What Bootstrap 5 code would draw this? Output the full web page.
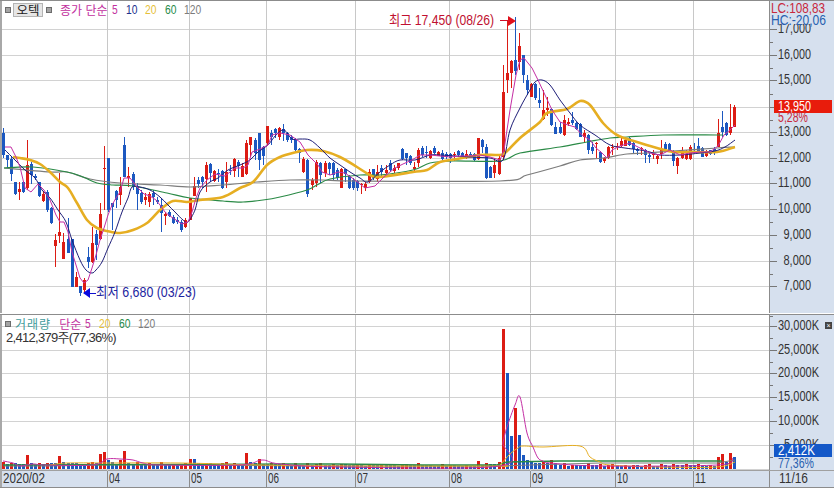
<!DOCTYPE html>
<html lang="ko">
<head>
<meta charset="utf-8">
<title>오텍 차트</title>
<link href="https://cdn.jsdelivr.net/npm/bootstrap@5.3.0/dist/css/bootstrap.min.css" rel="stylesheet">
<style>
html,body{margin:0;background:#fff;overflow:hidden}
body{font-family:"Liberation Sans","Noto Sans CJK KR",sans-serif}
.shell{width:834px;height:489px;border-top:1px solid #8c8c8c;background:#fff}
.pane-price{height:312px}
.pane-vol{height:156px;border-top:1px solid #8c8c8c}
.pane-sep{height:1px;background:#fff}
.dates{height:18px}
.plot{width:769px;flex:none;border-left:2px solid #a8a8a8}
.axis{width:65px;flex:none;background:#d6e0ee;border-left:1px solid #8c8c8c}
svg{display:block}
svg text{font-family:"Liberation Sans","Noto Sans CJK KR",sans-serif;font-size:14px}
.legend-bar{top:2px;left:5px;height:14px;white-space:nowrap}
.legend-bar2{top:2px;left:5px;white-space:nowrap}
.lg-row{height:14px;line-height:14px}
.sq{width:6px;height:6px;background:#a4a4a4;border:1px solid #6c6c6c;flex:none}
.ot-btn{width:30px;height:14px;margin:0 3px 0 2px;padding:0;font-size:12.5px;line-height:12px;background:#e6e6e6;border:1px solid #b4b4b4;border-radius:0;color:#222;font-family:"Noto Sans CJK KR",sans-serif}
.hg{font-family:"Noto Sans CJK KR",sans-serif;font-size:12px;line-height:14px}
.hg-wide{letter-spacing:1px}
.num{display:inline-block;font-family:"Liberation Sans",sans-serif;font-size:13.5px;line-height:14px;transform:scaleX(.76);transform-origin:left center}
.d1{width:6px}.d2{width:11.5px}.d3{width:17px}
.c-ma5{color:#c2309e}.c-ma10{color:#20308c}.c-ma20{color:#e6c038}.c-ma60{color:#1f8a48}.c-ma120{color:#7c7c7c}.c-vol{color:#3f9c9c}
.stat{height:14px;font-size:13px;line-height:14px;color:#333;letter-spacing:-.7px;margin-left:1px;font-family:"Liberation Sans","Noto Sans CJK KR",sans-serif}
.x-btn{top:7px;right:2px;width:7px;height:7px;background:#444;color:#fff;font-size:7px;line-height:7px;text-align:center}
</style>
</head>
<body>
<main class="shell d-flex flex-column">
  <section class="pane-price d-flex position-relative">
    <div class="plot"><svg id="priceSvg" width="767" height="312" viewBox="2 1 767 312"></svg></div>
    <div class="axis"><svg id="priceAxis" width="64" height="312" viewBox="770 1 64 312"></svg></div>
    <div class="legend-bar position-absolute d-flex align-items-center">
      <span class="sq"></span>
      <button type="button" class="ot-btn btn">오텍</button>
      <span class="sq"></span>
      <span class="hg c-ma5 ms-2">종가 단순</span>
      <span class="num d1 c-ma5 ms-1">5</span>
      <span class="num d2 c-ma10 ms-2">10</span>
      <span class="num d2 c-ma20 ms-2">20</span>
      <span class="num d2 c-ma60 ms-2">60</span>
      <span class="num d3 c-ma120 ms-2">120</span>
    </div>
  </section>
  <div class="pane-sep"></div>
  <section class="pane-vol d-flex position-relative">
    <div class="plot"><svg id="volSvg" width="767" height="156" viewBox="2 315 767 156"></svg></div>
    <div class="axis"><svg id="volAxis" width="64" height="156" viewBox="770 315 64 156"></svg></div>
    <div class="legend-bar2 position-absolute">
      <div class="lg-row d-flex align-items-center">
        <span class="sq"></span>
        <span class="hg hg-wide c-vol ms-1">거래량</span>
        <span class="hg c-ma5 ms-2">단순</span>
        <span class="num d1 c-ma5 ms-1">5</span>
        <span class="num d2 c-ma20 ms-2">20</span>
        <span class="num d2 c-ma60 ms-2">60</span>
        <span class="num d3 c-ma120 ms-2">120</span>
      </div>
      <div class="stat">2,412,379주(77,36%)</div>
    </div>
    <span class="x-btn position-absolute">×</span>
  </section>
  <footer class="dates"><svg id="dateSvg" width="834" height="18" viewBox="0 470 834 18"></svg></footer>
</main>
<script src="https://cdn.jsdelivr.net/npm/bootstrap@5.3.0/dist/js/bootstrap.bundle.min.js"></script>
<script>
const RED='#dc1c14',BLUE='#1c58c0',GRID='#d2d2d2',VGRID='#c8c8c8';
const raw=`4b 133 155 128 158|8b 155 160 155 168|12b 159 174 157 181|16b 182 194 182 195|20r 189 192 182 200|24b 182 192 181 193|28r 165 188 140 190|32b 164 175 162 184|36b 176 178 174 180|40b 182 196 182 197|44r 194 201 191 202|48b 192 210 190 212|52b 208 223 207 224|56r 240 246 234 267|60r 232 236 173 243|64r 242 259 233 259|69b 239 253 218 253|73b 239 287 239 287|77r 277 287 272 287|81b 286 293 286 296|85r 280 290 278 293|89b 257 262 247 268|93r 243 262 227 263|97b 234 245 230 260|101r 214 239 203 240|105r 168 169 146 210|109b 158 210 158 212|113b 203 207 203 230|117b 191 200 190 208|121r 187 195 177 205|125b 145 177 137 177|129r 176 178 167 187|134b 174 187 172 190|138b 187 194 183 210|142b 193 202 190 204|146r 197 200 193 205|150r 194 202 192 207|154b 193 197 190 205|158b 200 202 197 204|162b 205 213 198 232|166r 214 216 212 225|170b 212 216 210 217|174b 217 223 215 224|178b 220 222 217 224|182b 222 230 220 232|186r 220 227 218 228|191r 198 220 198 220|195r 186 196 177 196|199b 180 184 177 188|203b 177 182 176 188|207r 165 179 162 192|211b 164 173 163 182|215r 171 181 170 182|219b 173 174 169 182|223b 171 188 170 189|227r 172 182 162 188|231b 170 171 165 175|235r 159 171 158 177|239b 162 166 160 177|243r 166 177 163 177|247r 143 174 140 175|251r 137 145 137 157|256b 140 153 138 160|260b 133 160 133 170|264b 147 156 146 165|268r 126 143 126 145|272b 133 137 130 145|276b 129 133 128 138|280r 128 137 127 140|284b 129 133 124 141|288b 133 140 132 142|292b 137 140 135 143|296b 139 150 138 153|300b 149 153 148 163|304r 159 172 157 173|308b 160 194 159 197|313r 180 185 178 190|317r 162 183 160 187|321b 163 175 162 183|326r 163 173 161 177|330b 163 169 162 175|334b 163 175 162 180|338b 170 178 168 180|342r 169 188 168 188|346b 169 174 169 182|350b 176 188 175 189|354b 180 188 178 190|358b 181 188 180 191|362r 184 185 183 194|366r 184 188 182 191|370r 172 182 169 183|374b 169 178 169 180|378r 172 179 165 182|382b 168 172 165 178|387r 170 173 165 175|391b 163 170 160 172|395r 168 171 165 173|399r 163 168 163 170|403b 149 159 148 160|407b 153 158 153 165|411b 156 163 155 165|415r 167 169 162 172|419r 150 163 148 167|423b 148 155 146 157|427b 152 153 146 158|431r 151 158 150 159|435b 148 153 146 154|439r 152 156 151 156|443b 153 159 150 160|447b 154 157 152 159|451b 154 158 153 163|455r 154 155 152 161|459b 151 155 150 157|463b 153 156 152 158|467r 154 157 150 159|471b 154 156 152 157|475b 154 160 153 161|479r 138 159 138 160|483b 140 147 139 153|487b 147 178 144 179|491b 167 178 166 178|495r 165 173 158 178|500r 158 174 155 175|504r 92 157 65 160|508r 73 80 20 93|512r 61 73 60 88|516b 60 71 17 75|520r 46 62 33 70|524b 55 75 55 83|528b 80 90 75 95|532r 84 97 83 97|536b 84 98 83 100|540b 100 103 88 108|544r 110 119 90 120|548r 108 110 97 116|552b 109 125 108 126|556b 127 134 122 134|561b 127 133 122 134|565r 120 135 115 136|569r 122 124 118 126|573b 120 123 112 125|577b 123 129 122 130|581b 124 137 123 137|585r 133 137 130 142|589b 135 150 134 154|593b 147 151 142 154|597r 143 144 142 158|601b 152 162 151 163|605r 158 161 157 163|609r 147 158 146 159|613r 147 148 144 155|618r 146 147 143 150|622r 141 146 138 147|626r 140 146 137 146|630b 138 145 137 146|634b 143 149 142 153|638b 149 151 148 155|642r 148 149 147 155|646b 150 155 149 163|650b 155 157 153 163|654r 154 155 150 159|658r 156 159 155 164|662r 149 154 140 159|666b 144 149 142 152|670b 144 152 143 152|674b 151 161 150 166|678r 158 166 157 174|683r 151 158 147 159|687r 154 159 150 160|691r 147 159 145 160|695b 151 152 143 153|699b 146 152 138 153|703b 148 157 147 157|707r 152 156 150 157|711b 150 154 150 155|715b 149 153 147 155|719r 133 147 119 147|723b 127 132 111 137|727b 123 135 122 136|731r 127 133 104 135|735r 107 127 105 127`;
const candles=raw.split('|').map(s=>{const p=s.split(' ');return{x:parseInt(p[0]),c:p[0].slice(-1),t:+p[1],b:+p[2],h:+p[3],l:+p[4]}});

const ma5=`5,147 11,147 16,157 20,167 25,188 31,192 38,184 44,190 50,200 56,215 60,222 64,222 68,232 72,252 76,265 80,278 84,283 88,280 92,268 96,255 100,240 104,228 108,215 112,205 116,198 120,192 124,178 130,178 134,183 138,188 144,194 150,196 156,200 160,205 165,212 170,216 176,220 182,224 188,222 192,212 196,198 200,188 207,180 215,174 225,176 235,168 243,168 248,165 252,152 260,149 268,145 272,135 280,133 290,135 300,142 308,155 318,165 322,172 330,175 338,172 345,173 355,180 365,188 375,186 385,176 395,168 403,164 412,160 420,155 430,155 440,156 450,157 460,156 470,156 480,155 490,157 500,160 504,150 510,110 516,75 520,60 524,58 532,68 538,80 545,95 552,110 560,122 568,125 575,127 582,135 590,140 596,148 602,153 607,158 612,150 620,146 630,143 640,148 650,153 660,155 670,150 680,155 690,153 700,152 710,152 718,146 724,135 730,130 735,125`;
const ma10=`5,150 15,160 25,170 35,178 42,190 50,198 58,210 66,222 72,240 80,260 86,270 92,273 96,270 102,262 108,248 115,232 122,212 128,198 132,187 140,187 150,190 160,197 168,205 175,212 183,220 188,222 195,210 200,192 210,182 218,178 228,170 240,165 250,160 258,152 268,145 276,135 284,130 292,139 300,139 310,140 320,148 330,158 340,165 350,172 360,178 368,182 380,172 390,165 400,160 415,160 430,155 440,155 470,157 490,158 503,160 510,130 520,108 530,90 535,82 542,80 550,85 560,100 570,113 580,125 595,135 610,145 625,148 640,150 650,152 660,155 680,155 700,153 715,151 725,147 735,140`;
const ma20=`13,157 20,158 30,160 40,164 50,172 60,182 68,188 77,203 87,220 97,228 107,231 120,233 133,230 147,223 160,210 173,201 187,202 200,200 223,197 240,188 253,182 267,165 280,157 297,152 307,150 323,151 340,157 357,167 370,175 380,177 413,172 427,170 440,162 457,159 480,155 497,155 505,153 520,138 540,122 547,113 567,109 580,101 590,105 603,123 617,135 637,142 657,148 673,152 690,152 717,152 735,147`;
const ma60=`4,168 33,167 67,172 83,177 97,183 113,185 133,186 167,193 190,198 223,201 243,202 263,200 280,197 307,190 317,185 330,179 360,175 380,175 413,170 430,163 453,161 500,161 520,153 560,147 587,142 610,138 627,137 663,135 717,135 722,135`;
const ma120=`4,168 50,172 67,172 90,179 120,183 160,185 190,187 223,185 257,182 290,180 323,180 357,181 500,181 527,175 560,166 580,160 603,158 627,154 647,153 673,151 717,148 735,147`;

function NS(tag,attrs,txt){const e=document.createElementNS('http://www.w3.org/2000/svg',tag);for(const k in attrs)e.setAttribute(k,attrs[k]);if(txt!==undefined)e.textContent=txt;return e}
function rect(s,x,y,w,h,f){s.appendChild(NS('rect',{x,y,width:w,height:h,fill:f,'shape-rendering':'crispEdges'}))}
function poly(s,pts,col,w){s.appendChild(NS('polyline',{points:pts,fill:'none',stroke:col,'stroke-width':w,'stroke-linejoin':'round'}))}
/* smooth line through the points (Catmull-Rom) */
function curve(s,pts,col,w){
  const p=pts.split(' ').map(q=>q.split(',').map(Number));
  let d='M'+p[0].join(' ');
  for(let i=0;i<p.length-1;i++){
    const a=p[Math.max(0,i-1)],b=p[i],c=p[i+1],e=p[Math.min(p.length-1,i+2)];
    d+=' C'+(b[0]+(c[0]-a[0])/6).toFixed(1)+' '+(b[1]+(c[1]-a[1])/6).toFixed(1)+' '+(c[0]-(e[0]-b[0])/6).toFixed(1)+' '+(c[1]-(e[1]-b[1])/6).toFixed(1)+' '+c[0]+' '+c[1];
  }
  s.appendChild(NS('path',{d,fill:'none',stroke:col,'stroke-width':w,'stroke-linejoin':'round'}));
}
function txt(s,x,y,t,col,w,anchorEnd){const a={x,y,fill:col};if(w){a.textLength=w;a.lengthAdjust='spacingAndGlyphs'}if(anchorEnd)a['text-anchor']='end';s.appendChild(NS('text',a,t))}
const VLINES=[107,189,266,355,449,530,615,693];

/* price pane */
const P=document.getElementById('priceSvg');
[29,55,80,107,132,158,183,209,235,261,286].forEach(y=>rect(P,2,y,767,1,GRID));
VLINES.forEach(x=>rect(P,x,1,1,312,VGRID));
candles.forEach(c=>{const col=c.c==='r'?RED:BLUE;const l=c.x-1;
  rect(P,l,c.h,1,c.l-c.h,col);
  rect(P,l-1,c.t,3,Math.max(1,c.b-c.t),col);});
curve(P,ma120,'#7c7c7c',1.2);curve(P,ma60,'#2a8a46',1.2);curve(P,ma20,'#e6ae22',2.6);curve(P,ma10,'#1e1e78',1);poly(P,ma5,'#c42ea4',1);
txt(P,389,25,'최고 17,450 (08/26)','#c01030',105);
rect(P,500,20,8,1,'#d01028');P.appendChild(NS('polygon',{points:'508,16 516,21 508,26',fill:'#e0101c'}));
txt(P,96,297,'최저 6,680 (03/23)','#1c24a0',100);
rect(P,88,293,8,1,'#1010d0');P.appendChild(NS('polygon',{points:'83,293 90,288 90,298',fill:'#0808e0'}));

/* price axis */
const A=document.getElementById('priceAxis');
const ticks=[[17,29],[16,55],[15,80],[14,107],[13,132],[12,158],[11,183],[10,209],[9,235],[8,261],[7,286]];
ticks.forEach(([v,y],i)=>{rect(A,770,y,7,1,'#777');
  if(i<ticks.length-1)rect(A,770,Math.round((y+ticks[i+1][1])/2),3,1,'#777');
  if(v!==14){txt(A,811,y+4,v+',000','#333',v>=10?33:27.5,true);}});
rect(A,770,1,64,23,'#d6e0ee');
txt(A,771,13,'LC:108,83','#c8283c',54);
txt(A,771,25,'HC:-20,06','#2860b0',55);
rect(A,774,100,58,13,'#e81c0c');
txt(A,778,111,'13,950','#fff',33);
txt(A,778,122,'5,28%','#c8283c',30);

/* volume pane */
const V=document.getElementById('volSvg');
[326,350,373,397,421,445].forEach(y=>rect(V,2,y,767,1,GRID));
rect(V,2,469,767,1,GRID);
VLINES.forEach(x=>rect(V,x,315,1,156,VGRID));
const over={28:455,60:456,89:463,93:462,101:454,105:452,109:460,121:460,125:451,191:459,195:459,227:462,247:453,251:462,260:459,402:464,419:463,479:461,487:463,500:462,504:329,508:373,512:436,516:408,520:435,524:455,528:460,532:462,536:463,540:463,544:462,548:463,552:460,556:463,719:457,723:454,727:462,731:453,735:457};
let prev=999;
candles.forEach((c,i)=>{
  let top=over[c.x];
  if(top===undefined){const base=c.x<300?4:3;top=469-(base+Math.min(2,Math.floor((c.l-c.h)/10))+(i%3===0?1:0));}
  const col=top<prev?RED:BLUE;prev=top;
  rect(V,c.x-2,top,3,469-top,col);
});
poly(V,'4,466 50,466 100,465 200,465 300,466 500,466 530,465 600,463 717,463 735,460','#7c7c7c',1);
poly(V,'3,465 280,464 337,464 423,465 497,465 507,462 560,461 717,461 722,461','#2a8a46',1.4);
curve(V,'50,465 67,463 107,463 180,463 260,465 350,466 497,466 500,465 510,454 518,448 523,446 543,447 580,446 590,457 600,462 610,465 660,467 717,467 735,462','#e6ae22',1);
curve(V,'3,461 13,463 20,466 33,464 45,465 93,465 107,459 120,459 133,460 143,463 160,465 240,465 262,460 280,464 340,467 500,466 503,443 507,427 515,405 520,397 527,433 533,447 538,458 543,461 550,463 600,466 717,465 733,458','#c42ea4',1);

/* volume axis */
const B=document.getElementById('volAxis');
[[30,326],[25,350],[20,373],[15,397],[10,421],[5,445]].forEach(([v,y],i,arr)=>{rect(B,770,y,7,1,'#777');
  const next=i<arr.length-1?arr[i+1][1]:469;rect(B,770,Math.round((y+next)/2),3,1,'#777');
  txt(B,819,y+4,v+',000K','#333',v>=10?41:35,true);});
rect(B,770,316,3,1,'#777');
rect(B,774,444,58,13,'#1458c8');
txt(B,778,455,'2,412K','#fff',37);
rect(B,774,457,58,13,'#d6e0ee');
txt(B,778,468,'77,36%','#2860b0',36);

/* date bar */
const D=document.getElementById('dateSvg');
rect(D,0,470,834,18,'#d6e0ee');
rect(D,0,470,834,1,'#a0a0a0');
rect(D,0,470,2,18,'#a8a8a8');
rect(D,0,487,834,1,'#8c8c8c');
txt(D,3,483,'2020/02','#333',42);
[[107,'04'],[189,'05'],[266,'06'],[355,'07'],[449,'08'],[530,'09'],[615,'10'],[693,'11']].forEach(([x,t])=>{rect(D,x,471,1,16,'#8c8c8c');txt(D,x+2,483,t,'#333',11);});
rect(D,769,471,1,16,'#8c8c8c');
txt(D,779,483,'11/16','#333',29);
</script>
</body>
</html>
